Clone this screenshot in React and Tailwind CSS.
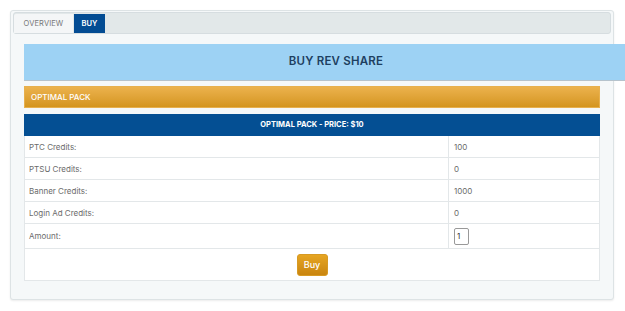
import React from "react";

const rows = [
  ["PTC Credits:", "100"],
  ["PTSU Credits:", "0"],
  ["Banner Credits:", "1000"],
  ["Login Ad Credits:", "0"],
];

export default function App() {
  return (
    <div className="w-[625px] h-[311px] overflow-hidden bg-white font-['Inter',sans-serif] text-[#6b6b6b]">
      <div className="pt-[10px] pl-[10px]">
        <div className="w-[604px] h-[290px] bg-[#f5f8f9] border border-[#dde3e5] rounded-[3px] shadow-[0_1px_2px_rgba(0,0,0,0.08)] px-[2px] pt-[1px]">
          <div className="h-[22px] bg-[#e2e8e9] border border-[#d6dde0] rounded-[3px] flex items-end">
            <div className="h-[19px] w-[59px] bg-[#f4f6f7] flex items-center justify-center text-[7.5px] text-[#777] tracking-[0.1px] rounded-tl-[2px]">
              OVERVIEW
            </div>
            <div className="h-[19px] w-[31px] ml-[1px] bg-[#034c93] flex items-center justify-center text-[7.5px] font-semibold text-white">
              BUY
            </div>
          </div>
          <div className="pl-[11px] pt-[10px]">
            <div className="w-[624px] h-[37px] bg-[#9dd2f4] border-b border-[#b6c3cc] flex items-center justify-center text-[11.5px] font-semibold text-[#1d3f60] tracking-[0.2px]">
              BUY REV SHARE
            </div>
            <div className="mt-[5px] w-[576px] h-[22px] bg-gradient-to-b from-[#ecb24c] to-[#d4951d] border border-[#e7b04e] flex items-center pl-[6px] text-[8px] font-medium text-white">
              OPTIMAL PACK
            </div>
            <table className="mt-[6px] w-[576px] border-collapse bg-white text-[8px]">
              <tbody>
                <tr>
                  <td colSpan={2} className="h-[21px] bg-[#044f93] border border-[#044f93] text-center text-white font-bold text-[7.5px]">
                    OPTIMAL PACK - PRICE: $10
                  </td>
                </tr>
                {rows.map(([k, v]) => (
                  <tr key={k}>
                    <td className="h-[22px] border border-[#e3e7e9] pl-[4px] w-[424px]">{k}</td>
                    <td className="h-[22px] border border-[#e3e7e9] pl-[5px]">{v}</td>
                  </tr>
                ))}
                <tr>
                  <td className="h-[25px] border border-[#e3e7e9] pl-[4px]">Amount:</td>
                  <td className="h-[25px] border border-[#e3e7e9] pl-[5px]">
                    <div className="w-[15px] h-[17px] border border-[#999] rounded-[2px] flex items-center pl-[2px] text-[8px] text-[#333]">
                      1
                    </div>
                  </td>
                </tr>
                <tr>
                  <td colSpan={2} className="h-[32px] border border-[#e3e7e9] text-center">
                    <button className="w-[31px] h-[22px] rounded-[3px] bg-gradient-to-b from-[#e6a522] to-[#c9850f] border border-[#d79a24] text-white text-[9px] font-medium">
                      Buy
                    </button>
                  </td>
                </tr>
              </tbody>
            </table>
          </div>
        </div>
      </div>
    </div>
  );
}
